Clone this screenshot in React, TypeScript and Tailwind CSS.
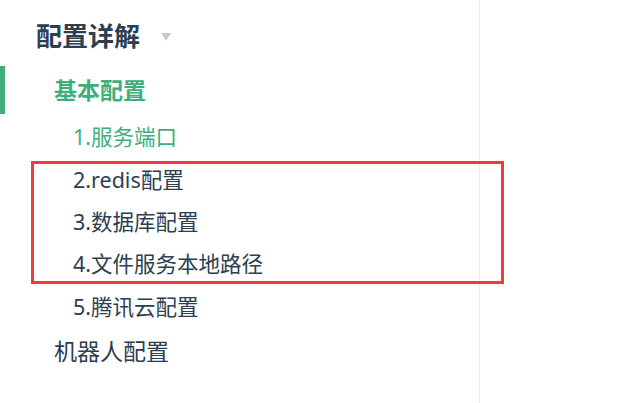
export default function App() {
  const font = { fontFamily: '"Noto Sans", "Noto Sans CJK SC", sans-serif' }

  return (
    <div className="flex h-[403px] w-[622px] bg-white text-[#2c3e50]" style={font}>
      <aside className="relative w-[480px] shrink-0 border-r border-[#eaecef]">
        {/* sidebar group heading */}
        <div className="mt-[14px] flex h-[44px] items-center pl-[36px]">
          <span className="text-[26px] font-bold leading-[44px]">配置详解</span>
          <span className="ml-[21px] mt-[2px] h-0 w-0 border-x-[5px] border-t-[8px] border-x-transparent border-t-[#c8c8c8]" />
        </div>

        {/* active link */}
        <div className="mt-[8px] flex h-[48px] items-center border-l-[5px] border-[#3eaf7c] pl-[49px]">
          <span className="text-[23px] font-bold text-[#3eaf7c]">基本配置</span>
        </div>

        <ul className="mt-[2px]">
          <li className="flex h-[42px] items-center pl-[73px] text-[21.5px] text-[#3eaf7c]">1.服务端口</li>
          <li className="mt-[3px]">
            <ul className="ml-[31px] flex w-[473px] flex-col gap-[10px] border-[3px] border-[#f63a3a] pb-[1px] pl-[39px]">
              <li className="flex h-[32px] items-center text-[21.5px]">2.redis配置</li>
              <li className="flex h-[32px] items-center text-[21.5px]">3.数据库配置</li>
              <li className="flex h-[32px] items-center text-[21.5px]">4.文件服务本地路径</li>
            </ul>
          </li>
          <li className="mt-[2px] flex h-[42px] items-center pl-[73px] text-[21.5px]">5.腾讯云配置</li>
        </ul>

        <div className="flex h-[46px] items-center pl-[54px] text-[23px]">机器人配置</div>
      </aside>
      <main className="flex-1" />
    </div>
  )
}
